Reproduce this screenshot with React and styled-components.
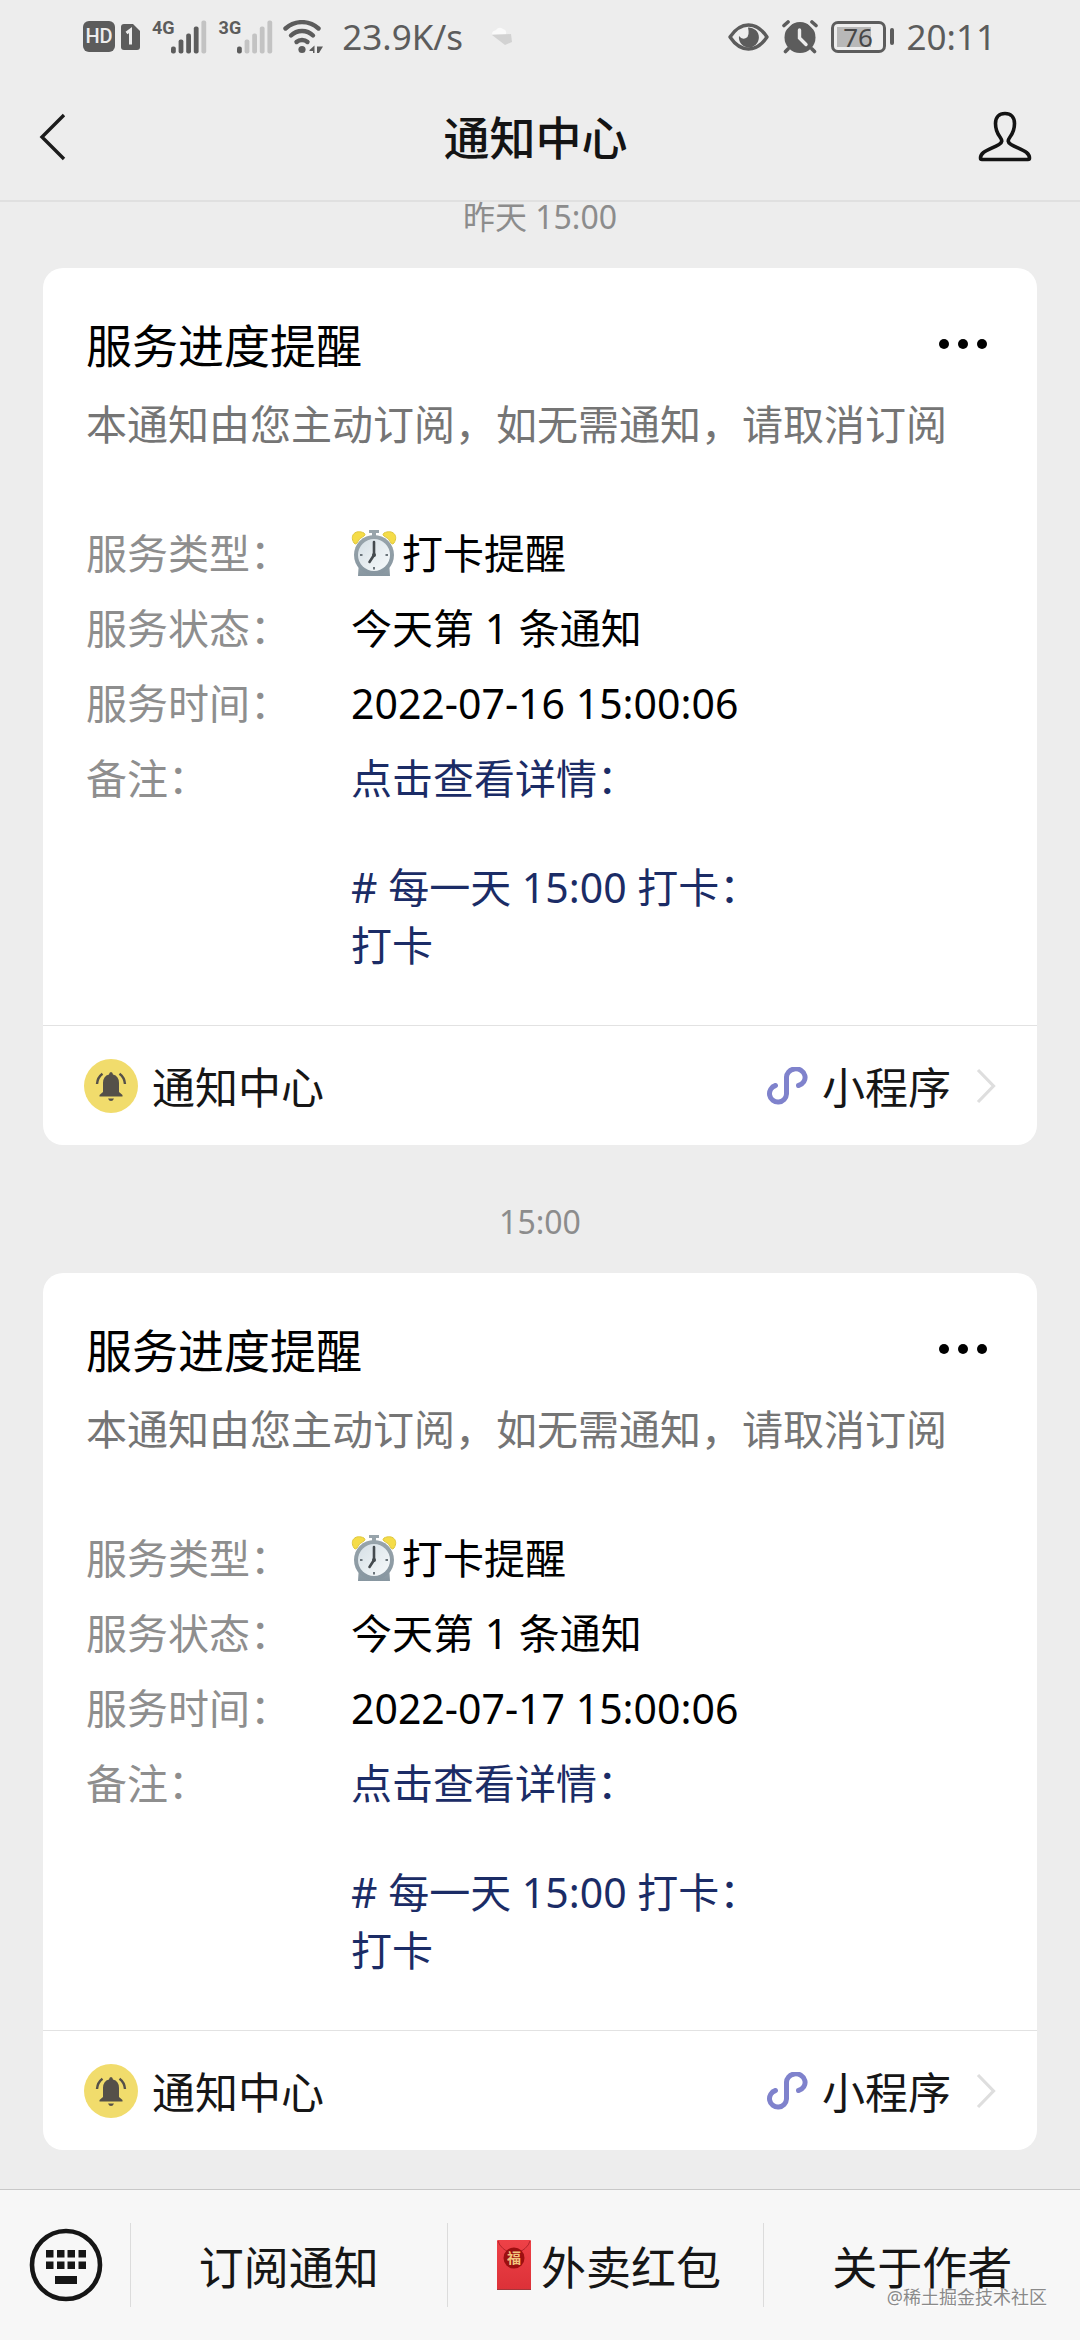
import React from "react";
import styled, { createGlobalStyle } from "styled-components";

const notices = [
  { id: 1, time: "昨天 15:00", date: "2022-07-16 15:00:06" },
  { id: 2, time: "15:00", date: "2022-07-17 15:00:06" },
];

const menus = [
  { id: "subscribe", label: "订阅通知" },
  { id: "coupon", label: "外卖红包", icon: true },
  { id: "about", label: "关于作者" },
];

const SignalIcon = ({ level }) => (
  <svg width="36" height="34" viewBox="0 0 36 34" aria-hidden="true">
    {[7, 14, 20, 27, 33].map((h, i) => (
      <rect
        key={h}
        x={i * 7.6}
        y={33.5 - h}
        width="4.8"
        height={h}
        rx="2"
        fill={i < level ? "#5c5c5c" : "#c3c3c3"}
      />
    ))}
  </svg>
);

const WifiIcon = () => (
  <svg width="41" height="34" viewBox="0 0 41 34" fill="none" stroke="#5c5c5c" strokeLinecap="round" aria-hidden="true">
    <path d="M2.5 8.5C12 0 26 0 35.5 8.5" strokeWidth="4.4" />
    <path d="M8 15.5C14 9.5 24 9.5 30 15.5" strokeWidth="4.4" />
    <path d="M13.5 22C16.5 19.3 21.5 19.3 24.5 22" strokeWidth="4.4" />
    <circle cx="19" cy="29.5" r="3.6" fill="#5c5c5c" stroke="none" />
    <path d="M26.500 30L31.500 25.500V33H30V31H26.500ZM34 26.500H40L36 33H34Z" fill="#5c5c5c" stroke="none" />
  </svg>
);

const SimIcon = () => (
  <svg width="19" height="26" viewBox="0 0 19 26" aria-hidden="true">
    <path d="M3 0H12L19 7V23Q19 26 16 26H3Q0 26 0 23V3Q0 0 3 0Z" fill="#5c5c5c" />
    <path d="M5.5 9L9.5 6V20.5" fill="none" stroke="#ededed" strokeWidth="3" />
  </svg>
);

const CloudIcon = () => (
  <svg width="22" height="22" viewBox="0 0 22 22" aria-hidden="true">
    <path d="M1 9L20 8L21 16L14 19Z" fill="#d2d2d2" />
    <path d="M1 8Q1 5 5 4Q8 0 12 3Q16 4 15 8Z" fill="#fafafa" />
  </svg>
);

const EyeIcon = () => (
  <svg width="41" height="28" viewBox="0 0 41 28" aria-hidden="true">
    <path d="M2 14Q10 2 20.5 2T39 14Q31 26 20.5 26T2 14Z" fill="none" stroke="#5c5c5c" strokeWidth="3.4" strokeLinejoin="round" />
    <path d="M20 4.500A10 10 0 1 1 11 13Q14 17 18 15T20 4.500Z" fill="#5c5c5c" />
  </svg>
);

const StatusAlarmIcon = () => (
  <svg width="36" height="34" viewBox="0 0 36 34" fill="none" stroke="#5c5c5c" strokeLinecap="round" aria-hidden="true">
    <circle cx="18" cy="17.5" r="15.5" fill="#5c5c5c" stroke="none" />
    <path d="M4 8L9 3M32 8L27 3" stroke="#ededed" strokeWidth="3" />
    <path d="M2 5.5L6 2M34 5.5L30 2" strokeWidth="3.6" />
    <path d="M6 29L3.5 31.5M30 29L32.5 31.5" strokeWidth="3.6" />
    <path d="M17.5 10V18L24 24.5" stroke="#ededed" strokeWidth="3.4" />
  </svg>
);

const BackIcon = () => (
  <svg width="28" height="48" viewBox="0 0 28 48" aria-hidden="true">
    <path d="M25 2L3 24L25 46" fill="none" stroke="#1c1c1c" strokeWidth="3.4" />
  </svg>
);

const PersonIcon = () => (
  <svg width="54" height="51" viewBox="0 0 54 51" aria-hidden="true">
    <path
      d="M27 2.5C21 2.5 17.500 6.500 17.500 12.500C17.500 19 19 22 22 26C24.500 29.500 24.500 31.500 21 33.500C16 36.500 10 38.500 5.500 41.500C3 43.500 2.500 45 2.500 47C2.500 48 3 48.500 4 48.500H50C51 48.500 51.500 48 51.500 47C51.500 45 51 43.500 48.500 41.500C44 38.500 38 36.500 33 33.500C29.500 31.500 29.500 29.500 32 26C35 22 36.500 19 36.500 12.500C36.500 6.500 33 2.500 27 2.500Z"
      fill="none"
      stroke="#141414"
      strokeWidth="3.6"
      strokeLinejoin="round"
    />
  </svg>
);

const MoreIcon = () => (
  <svg width="50" height="12" viewBox="0 0 50 12" aria-hidden="true">
    <circle cx="6" cy="5" r="5" />
    <circle cx="25" cy="5" r="5" />
    <circle cx="44" cy="5" r="5" />
  </svg>
);

const ClockEmoji = () => (
  <svg width="46" height="48" viewBox="0 0 46 48" role="img" aria-label="闹钟">
    <defs>
      <linearGradient id="clockBody" x1="0" y1="0" x2="0" y2="1">
        <stop offset="0" stopColor="#98a4ab" />
        <stop offset="1" stopColor="#8796a0" />
      </linearGradient>
      <linearGradient id="clockFace" x1="0" y1="0" x2="1" y2="1">
        <stop offset="0" stopColor="#d5dfe5" />
        <stop offset="1" stopColor="#f7fafb" />
      </linearGradient>
    </defs>
    <path d="M18 1H28V4H25V9H21V4H18Z" fill="#98a4ab" />
    <path d="M3 14C-2 6 5 0 13 4Q15 6 13 7Q8 9 6 14Q4 16 3 14ZM43 14C48 6 41 0 33 4Q31 6 33 7Q38 9 40 14Q42 16 43 14Z" fill="#f5dc48" stroke="#dfc73c" />
    <path d="M8 32H38L39 47H7Z" fill="url(#clockBody)" />
    <circle cx="23" cy="26" r="20" fill="url(#clockBody)" />
    <circle cx="23" cy="26" r="16" fill="url(#clockFace)" />
    <path d="M23 13V26L18.5 33" fill="none" stroke="#454b4f" strokeWidth="2.6" strokeLinecap="round" />
    <circle cx="23" cy="26" r="2" fill="#454b4f" />
    <path d="M9 26H11.500M34.500 26H37M23 38V40.500" stroke="#6b757b" strokeWidth="2" />
  </svg>
);

const BellIcon = () => (
  <svg width="54" height="54" viewBox="0 0 54 54" aria-hidden="true">
    <circle cx="27" cy="27" r="27" fill="#f1dc6c" />
    <path d="M27 13Q28.7 13 29 15.5Q35 17 35 24V33L38.5 36V37.5H15.5V36L19 33V24Q19 17 25 15.5Q25.3 13 27 13Z" fill="#555049" />
    <path d="M24 39.5H30Q29 42 27 42T24 39.5Z" fill="#555049" />
    <path d="M13 25Q13.5 18.5 18.5 14.8M41 25Q40.5 18.5 35.5 14.8" fill="none" stroke="#555049" strokeWidth="2.4" />
  </svg>
);

const MiniProgramIcon = () => (
  <svg width="42" height="38" viewBox="0 0 42 38" aria-hidden="true">
    <path
      d="M9.500 18.500A8.500 8.500 0 1 0 20.500 27V11A9.300 8.500 0 1 1 32.500 18.500"
      fill="none"
      stroke="#7f82cc"
      strokeWidth="5"
      strokeLinecap="round"
    />
  </svg>
);

const ChevronIcon = () => (
  <svg width="20" height="36" viewBox="0 0 20 36" aria-hidden="true">
    <path d="M2 2L17.5 18L2 34" fill="none" stroke="#dedede" strokeWidth="3.2" />
  </svg>
);

const KeyboardIcon = () => (
  <svg width="74" height="74" viewBox="0 0 74 74" aria-hidden="true">
    <circle cx="37" cy="37" r="34" fill="none" stroke="#161616" strokeWidth="4.6" />
    {[22, 33.5].map((y) =>
      [17, 28, 38.5, 49.5].map((x) => (
        <rect key={`${x}-${y}`} x={x} y={y} width="7.5" height="7.5" fill="#161616" />
      ))
    )}
    <rect x="26" y="48" width="22" height="8" fill="#161616" />
  </svg>
);

const EnvelopeIcon = () => (
  <svg width="42" height="50" viewBox="-7 0 42 50" aria-hidden="true">
    <defs>
      <linearGradient id="packet" x1="0" y1="0" x2="0" y2="1">
        <stop offset="0" stopColor="#ee4147" />
        <stop offset="1" stopColor="#dc3138" />
      </linearGradient>
    </defs>
    <rect width="34" height="50" rx="1" fill="url(#packet)" />
    <path d="M1 1Q3 9 17 15Q31 9 33 1" fill="none" stroke="#b3242b" />
    <path d="M0 49.5H34" stroke="#a3363a" />
    <circle cx="17" cy="18" r="10.5" fill="#9c0f10" />
    <text x="17" y="23" textAnchor="middle" fontSize="14" fontWeight="700" fill="#f3c47c">福</text>
  </svg>
);

const NoticeCard = ({ date }) => (
  <Card>
    <CardBody>
      <CardHead>
        <CardTitle>服务进度提醒</CardTitle>
        <IconButton type="button" aria-label="更多">
          <MoreIcon />
        </IconButton>
      </CardHead>
      <Description>本通知由您主动订阅，如无需通知，请取消订阅</Description>
      <Details>
        <Label>服务类型：</Label>
        <Value>
          <ClockEmoji />
          打卡提醒
        </Value>
        <Label>服务状态：</Label>
        <Value>今天第 1 条通知</Value>
        <Label>服务时间：</Label>
        <Value>{date}</Value>
        <Label>备注：</Label>
        <Value>
          <RemarkLink href="#detail">
            <p>点击查看详情：</p>
            <p>
              # 每一天 15:00 打卡：
              <br />
              打卡
            </p>
          </RemarkLink>
        </Value>
      </Details>
    </CardBody>
    <CardFooter href="#mini-program">
      <BellIcon />
      <FooterName>通知中心</FooterName>
      <MiniProgramIcon />
      <FooterType>小程序</FooterType>
      <ChevronIcon />
    </CardFooter>
  </Card>
);

const App = () => {
  return (
    <>
      <GlobalStyle />
      <Page>
        <Header>
          <StatusBar>
            <StatusGroup>
              <HdBadge>HD</HdBadge>
              <SimIcon />
              <Network>
                <NetworkType>4G</NetworkType>
                <SignalIcon level={4} />
              </Network>
              <Network>
                <NetworkType>3G</NetworkType>
                <SignalIcon level={1} />
              </Network>
              <WifiIcon />
              <Speed>23.9K/s</Speed>
              <CloudIcon />
            </StatusGroup>
            <StatusGroup $end>
              <EyeIcon />
              <StatusAlarmIcon />
              <Battery>
                <BatteryCase>
                  <BatteryLevel>76</BatteryLevel>
                </BatteryCase>
                <BatteryTip />
              </Battery>
              <span>20:11</span>
            </StatusGroup>
          </StatusBar>
          <NavBar>
            <IconButton type="button" aria-label="返回">
              <BackIcon />
            </IconButton>
            <NavTitle>通知中心</NavTitle>
            <IconButton type="button" aria-label="个人资料" $end>
              <PersonIcon />
            </IconButton>
          </NavBar>
        </Header>

        <Chat>
          {notices.map((notice) => (
            <Message key={notice.id}>
              <Timestamp>{notice.time}</Timestamp>
              <NoticeCard date={notice.date} />
            </Message>
          ))}
        </Chat>

        <MenuBar>
          <KeyboardButton type="button" aria-label="切换键盘">
            <KeyboardIcon />
          </KeyboardButton>
          {menus.map((menu) => (
            <MenuButton key={menu.id} type="button">
              {menu.icon && <EnvelopeIcon />}
              {menu.label}
            </MenuButton>
          ))}
          <Watermark>@稀土掘金技术社区</Watermark>
        </MenuBar>
      </Page>
    </>
  );
};

const GlobalStyle = createGlobalStyle`
  * {
    box-sizing: border-box;
  }

  body {
    margin: 0;
    background: #ededed;
    font-family: "Noto Sans", "Noto Sans CJK SC", sans-serif;
  }

  p, h1, h2, dl, dd {
    margin: 0;
  }

  button {
    padding: 0;
    border: 0;
    background: none;
    color: inherit;
    font: inherit;
  }

  a {
    color: inherit;
    text-decoration: none;
  }

  svg {
    display: block;
    flex-shrink: 0;
  }
`;

const Page = styled.div`
  min-height: 100vh;
  display: flex;
  flex-direction: column;
`;

const Header = styled.header`
  border-bottom: 2px solid #e0e0e0;
`;

const StatusBar = styled.div`
  display: flex;
  justify-content: space-between;
  height: 73px;
  padding: 0 84px 0 83px;
  color: #5c5c5c;
  font-size: 35px;
`;

const StatusGroup = styled.div`
  display: flex;
  align-items: center;
  gap: ${({ $end }) => ($end ? "13px" : "10px")};
`;

const HdBadge = styled.span`
  width: 32px;
  margin-right: -4px;
  border-radius: 6px;
  background: #5c5c5c;
  color: #ededed;
  font-family: Roboto, sans-serif;
  font-size: 20px;
  font-weight: 500;
  line-height: 31px;
  text-align: center;
`;

const Network = styled.div`
  display: flex;
  align-items: flex-start;
  margin-left: 2px;
`;

const NetworkType = styled.span`
  margin-right: -4px;
  font-family: Roboto, sans-serif;
  font-size: 18px;
  font-weight: 700;
  line-height: 16px;
`;

const Speed = styled.span`
  margin: 0 18px 0 8px;
`;

const Battery = styled.div`
  display: flex;
  align-items: center;
  gap: 4px;
`;

const BatteryCase = styled.div`
  padding: 3px;
  border: 3px solid #5c5c5c;
  border-radius: 7px;
`;

const BatteryLevel = styled.div`
  width: 43px;
  background: linear-gradient(to right, #b8b8b8 80%, transparent 80%);
  color: #474747;
  font-size: 26px;
  line-height: 20px;
  text-align: center;
`;

const BatteryTip = styled.div`
  width: 4px;
  height: 17px;
  border-radius: 2px;
  background: #5c5c5c;
`;

const NavBar = styled.nav`
  display: grid;
  grid-template-columns: 1fr auto 1fr;
  align-items: center;
  height: 127px;
  padding: 0 48px 0 39px;
`;

const NavTitle = styled.h1`
  color: #141414;
  font-size: 46px;
  font-weight: 500;
  line-height: 60px;
`;

const IconButton = styled.button`
  justify-self: ${({ $end }) => ($end ? "end" : "start")};
`;

const Chat = styled.main`
  flex: 1;
  padding: 0 43px 38px;
`;

const Message = styled.section`
  & + & {
    margin-top: 62px;
  }
`;

const Timestamp = styled.p`
  margin-bottom: 36px;
  color: #8c8c8c;
  font-size: 32px;
  line-height: 30px;
  text-align: center;
`;

const Card = styled.article`
  border-radius: 20px;
  background: #fff;
`;

const CardBody = styled.div`
  padding: 50px 43px 51px;
`;

const CardHead = styled.div`
  display: flex;
  align-items: center;
  justify-content: space-between;
  padding-right: 6px;
`;

const CardTitle = styled.h2`
  color: #000;
  font-size: 46px;
  font-weight: 400;
  line-height: 54px;
`;

const Description = styled.p`
  margin-top: 25px;
  color: #757575;
  font-size: 41px;
  line-height: 54px;
`;

const Details = styled.dl`
  display: grid;
  grid-template-columns: 265px 1fr;
  row-gap: 17px;
  margin-top: 73px;
  font-size: 41px;
  line-height: 58px;
`;

const Label = styled.dt`
  color: #8e8e8e;
`;

const Value = styled.dd`
  display: flex;
  align-items: center;
  gap: 5px;
  color: #000;
`;

const RemarkLink = styled.a`
  color: #1b2c66;

  p + p {
    margin-top: 51px;
  }
`;

const CardFooter = styled.a`
  display: flex;
  align-items: center;
  height: 120px;
  padding: 0 41px;
  border-top: 1px solid #e2e2e2;
  color: #161616;
  font-size: 43px;
`;

const FooterName = styled.span`
  flex: 1;
  margin-left: 14px;
`;

const FooterType = styled.span`
  margin: 0 25px 0 14px;
`;

const MenuBar = styled.footer`
  position: relative;
  display: flex;
  align-items: center;
  height: 151px;
  border-top: 1px solid #c8c8c8;
  background: #f7f7f7;
`;

const KeyboardButton = styled.button`
  width: 130px;
  padding-left: 29px;
`;

const MenuButton = styled.button`
  flex: 1;
  display: flex;
  align-items: center;
  justify-content: center;
  gap: 9px;
  height: 84px;
  border-left: 1px solid #dcdcdc;
  color: #161616;
  font-size: 45px;
`;

const Watermark = styled.span`
  position: absolute;
  right: 33px;
  bottom: 30px;
  color: #8a8a8a;
  font-size: 18px;
  line-height: 26px;
  text-shadow: 1px 1px 1px #fff;
`;

export default App;
